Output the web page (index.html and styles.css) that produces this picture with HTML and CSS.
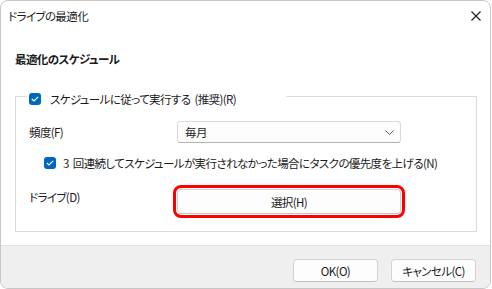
FILE: index.html
```html
<!DOCTYPE html>
<html lang="ja">
<head>
  <meta charset="UTF-8">
  <title>ドライブの最適化</title>
  <link rel="stylesheet" href="styles.css">
</head>
<body>
  <div class="window">
    <div class="titlebar">
      <span class="title">ドライブの最適化</span>
      <span class="close">
        <svg width="10" height="10" viewBox="0 0 10 10"><path d="M0.5 0.5 L9.5 9.5 M9.5 0.5 L0.5 9.5" stroke="#1a1a1a" stroke-width="1.1" fill="none"/></svg>
      </span>
    </div>

    <div class="content">
      <div class="heading">最適化のスケジュール</div>

      <div class="group">
        <label class="legend">
          <span class="check">
            <svg width="8" height="6" viewBox="0 0 8 6"><path d="M0.8 3 L3 5 L7.2 0.8" stroke="#fff" stroke-width="1.2" fill="none"/></svg>
          </span>
          <span>スケジュールに従って実行する (推奨)(R)</span>
        </label>

        <div class="row freq">
          <span class="label">頻度(F)</span>
          <div class="select">
            <span>毎月</span>
            <svg width="9" height="5" viewBox="0 0 9 5"><path d="M0.5 0.5 L4.5 4.5 L8.5 0.5" stroke="#5a5a5a" stroke-width="1" fill="none"/></svg>
          </div>
        </div>

        <label class="row sub">
          <span class="check">
            <svg width="8" height="6" viewBox="0 0 8 6"><path d="M0.8 3 L3 5 L7.2 0.8" stroke="#fff" stroke-width="1.2" fill="none"/></svg>
          </span>
          <span>3 回連続してスケジュールが実行されなかった場合にタスクの優先度を上げる(N)</span>
        </label>

        <div class="row drive">
          <span class="label">ドライブ(D)</span>
          <button class="btn pick">選択(H)</button>
        </div>
      </div>
    </div>

    <div class="footer">
      <button class="btn">OK(O)</button>
      <button class="btn">キャンセル(C)</button>
    </div>
  </div>
</body>
</html>
```

FILE: styles.css
```css
body {
  margin: 0;
  background: #ffffff;
  font-family: "Noto Sans CJK JP", "Noto Sans", sans-serif;
  font-size: 11.5px;
  letter-spacing: -0.6px;
  word-spacing: 2px;
  font-feature-settings: "palt";
  color: #1b1b1b;
}

.window {
  width: 491px;
  height: 289px;
  box-sizing: border-box;
  border: 1px solid #c6c6c6;
  border-radius: 8px;
  overflow: hidden;
  display: flex;
  flex-direction: column;
  background: #fff;
}

.titlebar {
  height: 30px;
  display: flex;
  align-items: center;
  justify-content: space-between;
  padding: 0 9px 0 7px;
  flex-shrink: 0;
}

.title {
  line-height: 16px;
}

.close {
  display: flex;
}

.content {
  padding: 20px 13px 0 14px;
}

.heading {
  font-weight: bold;
  line-height: 16px;
}

.group {
  margin-top: 29px;
  border: 1px solid #dcdcdc;
  padding: 0 14px 17px 13px;
}

.legend {
  display: flex;
  align-items: center;
  gap: 9px;
  width: 259px;
  box-sizing: border-box;
  margin: -6px 0 0 -2px;
  padding: 0 4px 0 2px;
  background: #fff;
  line-height: 16px;
}

.check {
  width: 12px;
  height: 12px;
  border-radius: 3px;
  background: #0067c0;
  display: flex;
  align-items: center;
  justify-content: center;
  flex-shrink: 0;
}

.row {
  display: flex;
  align-items: center;
  line-height: 16px;
  white-space: nowrap;
}

.label {
  width: 148px;
  flex-shrink: 0;
}

.freq {
  margin-top: 14px;
}

.select {
  width: 224px;
  height: 22px;
  box-sizing: border-box;
  border: 1px solid #dadada;
  border-bottom-color: #b4b4b4;
  border-radius: 3px;
  background: #fdfdfd;
  display: flex;
  align-items: center;
  justify-content: space-between;
  padding: 0 6px 0 7px;
}

.sub {
  margin-top: 12px;
  margin-left: 15px;
  gap: 7px;
}

.drive {
  margin-top: 18px;
  align-items: flex-start;
}

.btn {
  font: inherit;
  letter-spacing: inherit;
  word-spacing: inherit;
  color: inherit;
  height: 24px;
  box-sizing: border-box;
  border: 1px solid #d3d3d3;
  border-bottom-color: #c2c2c2;
  border-radius: 4px;
  background: #fdfdfd;
  padding: 0;
}

.pick {
  width: 224px;
  height: 25px;
  outline: 3px solid #ff0000;
  outline-offset: 1px;
}

.footer {
  margin-top: auto;
  height: 43px;
  box-sizing: border-box;
  border-top: 1px solid #e2e2e2;
  background: #efefef;
  display: flex;
  justify-content: flex-end;
  gap: 13px;
  padding: 13px 14px 0 0;
}

.footer .btn {
  width: 85px;
  height: 23px;
}
```
